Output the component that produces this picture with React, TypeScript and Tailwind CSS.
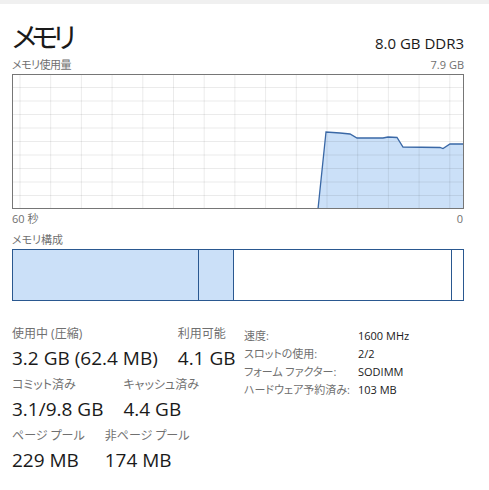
import React from "react";

const FONT =
  "[font-family:'Open_Sans','Noto_Sans_CJK_JP',sans-serif] [font-feature-settings:'palt']";

const W = 452;
const H = 135;

// 使用量の推移 (グラフ内の座標)
const points: [number, number][] = [
  [306, 135],
  [314, 58],
  [328, 59],
  [338, 60],
  [345, 64],
  [371, 64],
  [376, 63],
  [385, 63.5],
  [391, 73],
  [428, 73.5],
  [431, 74.5],
  [438, 70],
  [452, 70],
];

function UsageChart() {
  const vLines = Array.from({ length: 15 }, (_, i) => 8 + i * 30.7);
  const hLines = Array.from({ length: 9 }, (_, i) => (i + 1) * 13.5);
  const line = points.map(([x, y]) => `${x},${y}`).join(" ");
  const area = `${line} ${W},${H}`;
  return (
    <svg width={W} height={H} className="block">
      <rect x={0} y={0} width={W} height={H} fill="#ffffff" />
      <polygon points={area} fill="#cbe0f8" />
      {vLines.map((x) => (
        <line key={x} x1={x} y1={0} x2={x} y2={H} stroke="#000" strokeOpacity={0.08} />
      ))}
      {hLines.map((y) => (
        <line key={y} x1={0} y1={y} x2={W} y2={y} stroke="#000" strokeOpacity={0.08} />
      ))}
      <polyline points={line} fill="none" stroke="#3a68a6" strokeWidth={1.3} />
      <rect x={0.5} y={0.5} width={W - 1} height={H - 1} fill="none" stroke="#767676" />
    </svg>
  );
}

function Stat({ label, value }: { label: string; value: string }) {
  return (
    <div className="flex flex-col">
      <div className="text-[12px] leading-[16px] text-[#707070]">{label}</div>
      <div className="mt-[4px] text-[19px] leading-[24px] text-[#1a1a1a]">{value}</div>
    </div>
  );
}

const details = [
  { label: "速度:", value: "1600 MHz" },
  { label: "スロットの使用:", value: "2/2" },
  { label: "フォーム ファクター:", value: "SODIMM" },
  { label: "ハードウェア予約済み:", value: "103 MB" },
];

export default function App() {
  return (
    <div className={`w-[489px] h-[490px] overflow-hidden bg-white ${FONT}`}>
      <div className="h-[4px] bg-[#f0f0f0]" />
      <div className="ml-3 w-[452px]">
        <div className="mt-[14px] flex items-end justify-between">
          <div className="text-[28px] leading-[38px] tracking-[-5px] text-[#1a1a1a]">メモリ</div>
          <div className="pb-[3px] text-[15px] leading-[20px] text-[#1a1a1a]">8.0 GB DDR3</div>
        </div>
        <div className="mt-[1px] flex justify-between text-[11px] leading-[15px] text-[#707070]">
          <span className="tracking-[-0.5px]">メモリ使用量</span>
          <span>7.9 GB</span>
        </div>
        <div className="mt-[2px]">
          <UsageChart />
        </div>
        <div className="mt-[2px] flex justify-between text-[11px] leading-[15px] text-[#707070]">
          <span>60 秒</span>
          <span className="pr-[1px]">0</span>
        </div>
        <div className="mt-[6px] text-[11px] leading-[15px] text-[#707070]">メモリ構成</div>
        <div className="mt-[2px] flex h-[52px] border border-[#2a5890]">
          <div className="w-[186px] border-r border-[#2a5890] bg-[#cbe0f8]" />
          <div className="w-[35px] border-r border-[#2a5890] bg-[#cbe0f8]" />
          <div className="w-[218px] border-r border-[#2a5890] bg-white" />
          <div className="flex-1 bg-white" />
        </div>
        <div className="mt-[25px] flex">
          <div className="flex w-[232px] flex-col gap-[7px]">
            <div className="flex gap-[20px]">
              <Stat label="使用中 (圧縮)" value="3.2 GB (62.4 MB)" />
              <Stat label="利用可能" value="4.1 GB" />
            </div>
            <div className="flex gap-[20px]">
              <Stat label="コミット済み" value="3.1/9.8 GB" />
              <Stat label="キャッシュ済み" value="4.4 GB" />
            </div>
            <div className="flex gap-[20px]">
              <Stat label="ページ プール" value="229 MB" />
              <Stat label="非ページ プール" value="174 MB" />
            </div>
          </div>
          <div className="flex flex-col pt-[1px]">
            {details.map((d) => (
              <div key={d.label} className="flex text-[11px] leading-[18px]">
                <span className="w-[114px] text-[#707070]">{d.label}</span>
                <span className="text-[#1a1a1a]">{d.value}</span>
              </div>
            ))}
          </div>
        </div>
      </div>
    </div>
  );
}
